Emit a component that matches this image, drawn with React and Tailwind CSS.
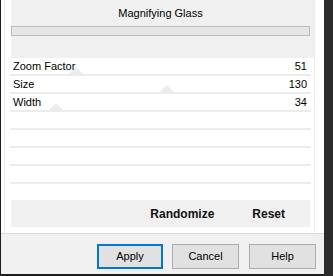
const ROWS = [
  { label: "Zoom Factor", value: "51", thumb: 64 },
  { label: "Size", value: "130", thumb: 155 },
  { label: "Width", value: "34", thumb: 44 },
  { label: "", value: "" },
  { label: "", value: "" },
  { label: "", value: "" },
  { label: "", value: "" },
];

const font = { fontFamily: '"Liberation Sans", Arial, sans-serif' };

const Row = ({ row }) => (
  <div>
    <div className="relative flex h-[16px] items-center justify-between pl-[8px] pr-[7px] text-[11px] text-black">
      {row.thumb !== undefined && (
        <span
          className="absolute bottom-[0px] h-0 w-0 border-x-[7px] border-b-[7px] border-x-transparent border-b-[#ececec]"
          style={{ left: row.thumb }}
        />
      )}
      <span className="relative">{row.label}</span>
      <span className="relative">{row.value}</span>
    </div>
    <div className="ml-[5px] mr-[3px] h-[2px] bg-[#ececec]" />
  </div>
);

const Button = ({ children, active, width }) => (
  <button
    className={
      active
        ? "h-[25px] border-2 border-[#0078d7] bg-[#e1e1e1] text-[11px] text-black"
        : "h-[25px] border border-[#adadad] bg-[#e1e1e1] text-[11px] text-black"
    }
    style={{ width }}
  >
    {children}
  </button>
);

export default function App() {
  return (
    <div className="flex h-[276px] w-[333px] overflow-hidden bg-[#f0f0f0]" style={font}>
      <div className="w-px bg-[#1e1e1e]" />
      <div className="flex w-[323px] flex-col">
        <div className="flex h-[234px] border-b border-[#dadada] bg-white">
          <div className="w-[3px]" />
          <div className="w-px bg-[#ececec]" />
          <div className="flex w-[309px] flex-col">
            <div className="flex h-[58px]">
              <div className="w-[6px]" />
              <div className="flex flex-1 flex-col bg-[#f0f0f0]">
                <div className="flex h-[26px] w-[299px] items-center justify-center pt-[1px] text-[11px] text-black">
                  Magnifying Glass
                </div>
                <div className="h-[10px] w-[299px] border border-[#bcbcbc] bg-[#e6e6e6]" />
              </div>
            </div>
            {ROWS.map((row, i) => (
              <Row key={i} row={row} />
            ))}
            <div className="h-[16px]" />
            <div className="ml-[6px] flex h-[27px] w-[299px] items-center justify-end gap-[38px] bg-[#f0f0f0] pr-[25px] text-[12px] font-bold text-[#111]">
              <span>Randomize</span>
              <span>Reset</span>
            </div>
          </div>
          <div className="w-px bg-[#ececec]" />
          <div className="w-[5px]" />
        </div>
        <div className="flex flex-1 items-start pl-[96px] pt-[10px]">
          <Button active width={66}>Apply</Button>
          <div className="w-[9px]" />
          <Button width={67}>Cancel</Button>
          <div className="w-[10px]" />
          <Button width={67}>Help</Button>
        </div>
        <div className="h-[2px] bg-[#1e1e1e]" />
      </div>
      <div className="w-[9px] bg-[#2b2b2b]" />
    </div>
  );
}
